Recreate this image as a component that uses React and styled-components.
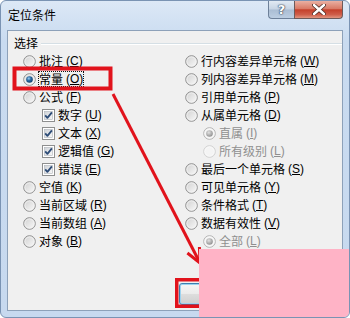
import React from 'react'
import styled, { createGlobalStyle } from 'styled-components'

const Global = createGlobalStyle`
  html, body { margin: 0; padding: 0; background: #fff; }
  body { font-family: "Noto Sans CJK SC", "Noto Sans", sans-serif; }
`

const leftItems = [
  { label: '批注', key: 'C' },
  { label: '常量', key: 'O', checked: true, focused: true },
  { label: '公式', key: 'F' },
  { label: '数字', key: 'U', box: true, checked: true, indent: 19 },
  { label: '文本', key: 'X', box: true, checked: true, indent: 19 },
  { label: '逻辑值', key: 'G', box: true, checked: true, indent: 19 },
  { label: '错误', key: 'E', box: true, checked: true, indent: 19 },
  { label: '空值', key: 'K' },
  { label: '当前区域', key: 'R' },
  { label: '当前数组', key: 'A' },
  { label: '对象', key: 'B' },
]

const rightItems = [
  { label: '行内容差异单元格', key: 'W' },
  { label: '列内容差异单元格', key: 'M' },
  { label: '引用单元格', key: 'P' },
  { label: '从属单元格', key: 'D' },
  { label: '直属', key: 'I', indent: 18, disabled: true, checked: true },
  { label: '所有级别', key: 'L', indent: 18, disabled: true },
  { label: '最后一个单元格', key: 'S' },
  { label: '可见单元格', key: 'Y' },
  { label: '条件格式', key: 'T' },
  { label: '数据有效性', key: 'V' },
  { label: '全部', key: 'L', indent: 18, disabled: true, checked: true },
  { label: '相同', key: 'E', indent: 18, disabled: true },
]

const Defs = () => (
  <svg width="0" height="0" style={{ position: 'absolute' }}>
    <defs>
      <linearGradient id="radioFill" x1="0" y1="0" x2="1" y2="1">
        <stop offset="0" stopColor="#cfcfcf" />
        <stop offset="1" stopColor="#fbfbfb" />
      </linearGradient>
      <radialGradient id="radioDot" cx="0.4" cy="0.35" r="0.7">
        <stop offset="0" stopColor="#9fd0f3" />
        <stop offset="0.45" stopColor="#2a6aa3" />
        <stop offset="1" stopColor="#0d3a66" />
      </radialGradient>
      <radialGradient id="radioDotOff" cx="0.4" cy="0.35" r="0.7">
        <stop offset="0" stopColor="#e2e2e2" />
        <stop offset="1" stopColor="#8c8c8c" />
      </radialGradient>
      <linearGradient id="boxFill" x1="0" y1="0" x2="1" y2="1">
        <stop offset="0" stopColor="#cfd3d8" />
        <stop offset="1" stopColor="#f8f8f8" />
      </linearGradient>
    </defs>
  </svg>
)

const Radio = ({ checked, disabled }) => (
  <Mark viewBox="0 0 13 13">
    <circle cx="6.5" cy="6.5" r="5.8" fill={disabled ? '#f4f4f4' : 'url(#radioFill)'}
      stroke={disabled ? (checked ? '#b0b0b0' : '#d0d0d0') : '#8e8e8e'} strokeWidth="1" />
    <circle cx="6.5" cy="6.5" r="4.6" fill="none" stroke={disabled ? '#fafafa' : '#f4f4f4'} strokeWidth="0.8" />
    {checked && (
      <circle cx="6.5" cy="6.5" r="3.3" fill={disabled ? 'url(#radioDotOff)' : 'url(#radioDot)'} />
    )}
  </Mark>
)

const Check = () => (
  <Mark viewBox="0 0 13 13">
    <rect x="0.5" y="0.5" width="12" height="12" fill="#fff" stroke="#8e8f8f" />
    <rect x="2.5" y="2.5" width="8" height="8" fill="url(#boxFill)" stroke="#aeb3b9" strokeWidth="0.6" />
    <path d="M3.2 6.4 L5.4 8.9 L9.9 3.4" fill="none" stroke="#2d4c77" strokeWidth="1.8" strokeLinejoin="round" />
  </Mark>
)

const Option = ({ item }) => (
  <Row $indent={item.indent} $disabled={item.disabled}>
    {item.box ? <Check /> : <Radio checked={item.checked} disabled={item.disabled} />}
    <Label $focused={item.focused}>
      {item.label}
      <Key>(<u>{item.key}</u>)</Key>
    </Label>
  </Row>
)

const App = () => (
  <>
    <Global />
    <Defs />
    <Window>
      <TitleBar>
        <Title>定位条件</Title>
        <Controls>
          <HelpButton>?</HelpButton>
          <CloseButton>
            <svg width="14" height="11" viewBox="0 0 14 11">
              <path d="M2 1 L12 10 M12 1 L2 10" stroke="#4a2a24" strokeWidth="4" strokeLinecap="round" />
              <path d="M2 1 L12 10 M12 1 L2 10" stroke="#fff" strokeWidth="2.4" strokeLinecap="round" />
            </svg>
          </CloseButton>
        </Controls>
      </TitleBar>
      <Client>
        <Legend>
          <LegendText>选择</LegendText>
          <LegendLine />
        </Legend>
        <Columns>
          <Column $width={162}>
            {leftItems.map((it, i) => <Option key={i} item={it} />)}
          </Column>
          <Column>
            {rightItems.map((it, i) => <Option key={i} item={it} />)}
          </Column>
        </Columns>
        <ButtonRow>
          <Button $default>确定</Button>
          <Button>取消</Button>
        </ButtonRow>
      </Client>
      <Annotations viewBox="0 0 350 318" width="350" height="318">
        <rect x="14.5" y="68.5" width="96" height="20" fill="none" stroke="#e1131c" strokeWidth="4" />
        <line x1="113" y1="94" x2="199.5" y2="262" stroke="#e1131c" strokeWidth="3" />
        <polyline points="187.4,253 200,263 199.4,247" fill="none" stroke="#e1131c" strokeWidth="3" />
        <rect x="176.75" y="279.75" width="85" height="26.5" fill="none" stroke="#e1131c" strokeWidth="3.5" />
      </Annotations>
      <Cover />
    </Window>
  </>
)

export default App

const Window = styled.div`
  position: relative;
  width: 350px;
  height: 318px;
  box-sizing: border-box;
  display: flex;
  flex-direction: column;
  border: 1px solid #7a93b3;
  border-radius: 6px;
  background: linear-gradient(#dce8f6, #c9dbf0 40px, #c7d9ef);
  overflow: hidden;
`

const TitleBar = styled.div`
  height: 29px;
  display: flex;
  align-items: flex-start;
  justify-content: space-between;
`

const Title = styled.div`
  padding: 5px 0 0 7px;
  font-size: 12px;
  line-height: 18px;
  color: #000;
`

const Controls = styled.div`
  display: flex;
  margin-right: 6px;
`

const HelpButton = styled.div`
  width: 26px;
  height: 18px;
  box-sizing: border-box;
  border: 1px solid #6d8099;
  border-top: none;
  border-right: none;
  border-radius: 0 0 0 4px;
  background: linear-gradient(#e2eaf3 0%, #c6d4e4 48%, #aabdd3 52%, #bccee2 100%);
  color: #fff;
  font: bold 13px "DejaVu Sans", sans-serif;
  line-height: 17px;
  text-align: center;
  text-shadow: 0 0 1px #3b4a5e, 0 0 1px #3b4a5e, 0 0 2px #3b4a5e;
`

const CloseButton = styled.div`
  width: 49px;
  height: 18px;
  box-sizing: border-box;
  border: 1px solid #6d5a5a;
  border-top: none;
  border-radius: 0 0 4px 0;
  background: linear-gradient(#eab0a2 0%, #d97a66 45%, #c4402b 52%, #cf5e4a 80%, #e19580 100%);
  display: flex;
  align-items: center;
  justify-content: center;
`

const Client = styled.div`
  flex: 1;
  margin: 0 6px 6px;
  border: 1px solid #8da1b9;
  background: #f0f0f0;
  display: flex;
  flex-direction: column;
`

const Legend = styled.div`
  display: flex;
  align-items: center;
  margin-top: 5px;
  padding-left: 6px;
  height: 14px;
`

const LegendText = styled.span`
  font-size: 12px;
  line-height: 14px;
  color: #000;
  padding-right: 3px;
`

const LegendLine = styled.div`
  flex: 1;
  height: 0;
  border-top: 1px solid #d5dfe5;
  border-bottom: 1px solid #fff;
  margin-top: 1px;
`

const Columns = styled.div`
  display: flex;
  margin-top: 2px;
  padding-left: 15px;
`

const Column = styled.div`
  display: flex;
  flex-direction: column;
  width: ${p => (p.$width ? `${p.$width}px` : 'auto')};
  flex: ${p => (p.$width ? 'none' : '1')};
`

const Row = styled.div`
  height: 18px;
  display: flex;
  align-items: center;
  padding-left: ${p => p.$indent || 0}px;
  color: ${p => (p.$disabled ? '#8f8f8f' : '#000')};
  font-size: 12px;
`

const Mark = styled.svg`
  width: 13px;
  height: 13px;
  flex: none;
`

const Label = styled.span`
  margin-left: 2px;
  padding: 0 1px;
  height: 16px;
  line-height: 16px;
  white-space: nowrap;
  outline: ${p => (p.$focused ? '1px dotted #111' : 'none')};
  outline-offset: -1px;
  display: flex;
  align-items: center;
`

const Key = styled.span`
  margin-left: 3px;
  font: 12px "Liberation Sans", Arial, sans-serif;
`

const ButtonRow = styled.div`
  margin-top: auto;
  display: flex;
  justify-content: flex-end;
  gap: 6px;
  padding: 0 7px 5px 0;
`

const Button = styled.div`
  width: 75px;
  height: 22px;
  box-sizing: border-box;
  border: 1px solid ${p => (p.$default ? '#3c7fb1' : '#707070')};
  border-radius: 3px;
  background: linear-gradient(#f6f6f6 0%, #ebebeb 48%, #dddddd 52%, #cfcfcf 100%);
  box-shadow: ${p => (p.$default ? 'inset 0 0 0 1px #9cd3f0' : 'inset 0 0 0 1px #fcfcfc')};
  font-size: 12px;
  line-height: 20px;
  text-align: center;
`

const Annotations = styled.svg`
  position: absolute;
  left: -1px;
  top: -1px;
  pointer-events: none;
`

const Cover = styled.div`
  position: absolute;
  left: 198px;
  top: 248px;
  right: -1px;
  bottom: -1px;
  background: #ffb3c6;
`
